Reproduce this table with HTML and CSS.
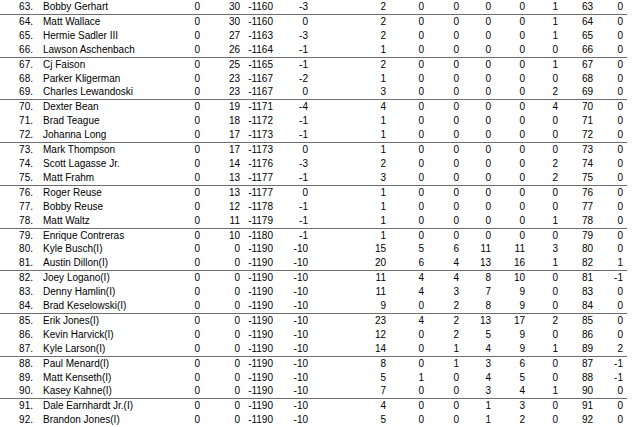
FILE: index.html
```html
<!DOCTYPE html>
<html>
<head>
<meta charset="utf-8">
<link rel="stylesheet" href="styles.css">
</head>
<body>
<table class="standings">
<colgroup>
<col class="c-rank"><col class="c-name"><col class="c3"><col class="c4"><col class="c5"><col class="c6"><col class="c7"><col class="c8"><col class="c9"><col class="c10"><col class="c11"><col class="c12"><col class="c13"><col class="c14">
</colgroup>
<tbody>
<tr><td>63.</td><td>Bobby Gerhart</td><td>0</td><td>30</td><td>-1160</td><td>-3</td><td>2</td><td>0</td><td>0</td><td>0</td><td>0</td><td>1</td><td>63</td><td>0</td></tr>
<tr class="sep"><td>64.</td><td>Matt Wallace</td><td>0</td><td>30</td><td>-1160</td><td>0</td><td>2</td><td>0</td><td>0</td><td>0</td><td>0</td><td>1</td><td>64</td><td>0</td></tr>
<tr><td>65.</td><td>Hermie Sadler III</td><td>0</td><td>27</td><td>-1163</td><td>-3</td><td>2</td><td>0</td><td>0</td><td>0</td><td>0</td><td>1</td><td>65</td><td>0</td></tr>
<tr><td>66.</td><td>Lawson Aschenbach</td><td>0</td><td>26</td><td>-1164</td><td>-1</td><td>1</td><td>0</td><td>0</td><td>0</td><td>0</td><td>0</td><td>66</td><td>0</td></tr>
<tr class="sep"><td>67.</td><td>Cj Faison</td><td>0</td><td>25</td><td>-1165</td><td>-1</td><td>2</td><td>0</td><td>0</td><td>0</td><td>0</td><td>1</td><td>67</td><td>0</td></tr>
<tr><td>68.</td><td>Parker Kligerman</td><td>0</td><td>23</td><td>-1167</td><td>-2</td><td>1</td><td>0</td><td>0</td><td>0</td><td>0</td><td>0</td><td>68</td><td>0</td></tr>
<tr><td>69.</td><td>Charles Lewandoski</td><td>0</td><td>23</td><td>-1167</td><td>0</td><td>3</td><td>0</td><td>0</td><td>0</td><td>0</td><td>2</td><td>69</td><td>0</td></tr>
<tr class="sep"><td>70.</td><td>Dexter Bean</td><td>0</td><td>19</td><td>-1171</td><td>-4</td><td>4</td><td>0</td><td>0</td><td>0</td><td>0</td><td>4</td><td>70</td><td>0</td></tr>
<tr><td>71.</td><td>Brad Teague</td><td>0</td><td>18</td><td>-1172</td><td>-1</td><td>1</td><td>0</td><td>0</td><td>0</td><td>0</td><td>0</td><td>71</td><td>0</td></tr>
<tr><td>72.</td><td>Johanna Long</td><td>0</td><td>17</td><td>-1173</td><td>-1</td><td>1</td><td>0</td><td>0</td><td>0</td><td>0</td><td>0</td><td>72</td><td>0</td></tr>
<tr class="sep"><td>73.</td><td>Mark Thompson</td><td>0</td><td>17</td><td>-1173</td><td>0</td><td>1</td><td>0</td><td>0</td><td>0</td><td>0</td><td>0</td><td>73</td><td>0</td></tr>
<tr><td>74.</td><td>Scott Lagasse Jr.</td><td>0</td><td>14</td><td>-1176</td><td>-3</td><td>2</td><td>0</td><td>0</td><td>0</td><td>0</td><td>2</td><td>74</td><td>0</td></tr>
<tr><td>75.</td><td>Matt Frahm</td><td>0</td><td>13</td><td>-1177</td><td>-1</td><td>3</td><td>0</td><td>0</td><td>0</td><td>0</td><td>2</td><td>75</td><td>0</td></tr>
<tr class="sep"><td>76.</td><td>Roger Reuse</td><td>0</td><td>13</td><td>-1177</td><td>0</td><td>1</td><td>0</td><td>0</td><td>0</td><td>0</td><td>0</td><td>76</td><td>0</td></tr>
<tr><td>77.</td><td>Bobby Reuse</td><td>0</td><td>12</td><td>-1178</td><td>-1</td><td>1</td><td>0</td><td>0</td><td>0</td><td>0</td><td>0</td><td>77</td><td>0</td></tr>
<tr><td>78.</td><td>Matt Waltz</td><td>0</td><td>11</td><td>-1179</td><td>-1</td><td>1</td><td>0</td><td>0</td><td>0</td><td>0</td><td>1</td><td>78</td><td>0</td></tr>
<tr class="sep"><td>79.</td><td>Enrique Contreras</td><td>0</td><td>10</td><td>-1180</td><td>-1</td><td>1</td><td>0</td><td>0</td><td>0</td><td>0</td><td>0</td><td>79</td><td>0</td></tr>
<tr><td>80.</td><td>Kyle Busch(I)</td><td>0</td><td>0</td><td>-1190</td><td>-10</td><td>15</td><td>5</td><td>6</td><td>11</td><td>11</td><td>3</td><td>80</td><td>0</td></tr>
<tr><td>81.</td><td>Austin Dillon(I)</td><td>0</td><td>0</td><td>-1190</td><td>-10</td><td>20</td><td>6</td><td>4</td><td>13</td><td>16</td><td>1</td><td>82</td><td>1</td></tr>
<tr class="sep"><td>82.</td><td>Joey Logano(I)</td><td>0</td><td>0</td><td>-1190</td><td>-10</td><td>11</td><td>4</td><td>4</td><td>8</td><td>10</td><td>0</td><td>81</td><td>-1</td></tr>
<tr><td>83.</td><td>Denny Hamlin(I)</td><td>0</td><td>0</td><td>-1190</td><td>-10</td><td>11</td><td>4</td><td>3</td><td>7</td><td>9</td><td>0</td><td>83</td><td>0</td></tr>
<tr><td>84.</td><td>Brad Keselowski(I)</td><td>0</td><td>0</td><td>-1190</td><td>-10</td><td>9</td><td>0</td><td>2</td><td>8</td><td>9</td><td>0</td><td>84</td><td>0</td></tr>
<tr class="sep"><td>85.</td><td>Erik Jones(I)</td><td>0</td><td>0</td><td>-1190</td><td>-10</td><td>23</td><td>4</td><td>2</td><td>13</td><td>17</td><td>2</td><td>85</td><td>0</td></tr>
<tr><td>86.</td><td>Kevin Harvick(I)</td><td>0</td><td>0</td><td>-1190</td><td>-10</td><td>12</td><td>0</td><td>2</td><td>5</td><td>9</td><td>0</td><td>86</td><td>0</td></tr>
<tr><td>87.</td><td>Kyle Larson(I)</td><td>0</td><td>0</td><td>-1190</td><td>-10</td><td>14</td><td>0</td><td>1</td><td>4</td><td>9</td><td>1</td><td>89</td><td>2</td></tr>
<tr class="sep"><td>88.</td><td>Paul Menard(I)</td><td>0</td><td>0</td><td>-1190</td><td>-10</td><td>8</td><td>0</td><td>1</td><td>3</td><td>6</td><td>0</td><td>87</td><td>-1</td></tr>
<tr><td>89.</td><td>Matt Kenseth(I)</td><td>0</td><td>0</td><td>-1190</td><td>-10</td><td>5</td><td>1</td><td>0</td><td>4</td><td>5</td><td>0</td><td>88</td><td>-1</td></tr>
<tr><td>90.</td><td>Kasey Kahne(I)</td><td>0</td><td>0</td><td>-1190</td><td>-10</td><td>7</td><td>0</td><td>0</td><td>3</td><td>4</td><td>1</td><td>90</td><td>0</td></tr>
<tr class="sep"><td>91.</td><td>Dale Earnhardt Jr.(I)</td><td>0</td><td>0</td><td>-1190</td><td>-10</td><td>4</td><td>0</td><td>0</td><td>1</td><td>3</td><td>0</td><td>91</td><td>0</td></tr>
<tr><td>92.</td><td>Brandon Jones(I)</td><td>0</td><td>0</td><td>-1190</td><td>-10</td><td>5</td><td>0</td><td>0</td><td>1</td><td>2</td><td>0</td><td>92</td><td>0</td></tr>
</tbody>
</table>
</body>
</html>
```
FILE: styles.css
```css
html, body {
  margin: 0;
  padding: 0;
  background: #ffffff;
}

.standings {
  border-collapse: collapse;
  table-layout: fixed;
  width: 627px;
  font-family: "Liberation Sans", Arial, sans-serif;
  font-size: 10px;
  color: #000000;
}

.standings td {
  padding: 0;
  height: 13.9px;
  line-height: 13.9px;
  text-align: right;
  white-space: nowrap;
  overflow: visible;
}

.standings td:nth-child(1) { padding-right: 1px; }
.standings td:nth-child(2) { text-align: left; padding-left: 9px; }
.standings td:nth-child(14) { padding-right: 4px; }

.standings tr.sep td {
  border-top: 1px solid #6e6e6e;
}

.c-rank { width: 34px; }
.c-name { width: 136px; }
.c3 { width: 30px; }
.c4 { width: 40px; }
.c5 { width: 33px; }
.c6 { width: 35px; }
.c7 { width: 78px; }
.c8 { width: 38px; }
.c9 { width: 35px; }
.c10 { width: 32px; }
.c11 { width: 34px; }
.c12 { width: 33px; }
.c13 { width: 35px; }
.c14 { width: 34px; }
```
